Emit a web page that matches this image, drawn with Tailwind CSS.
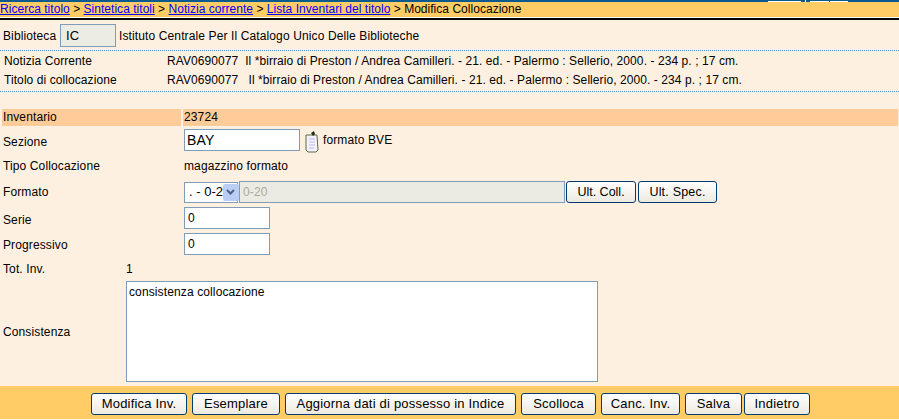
<!DOCTYPE html>
<html lang="it">

<head>
    <meta charset="UTF-8">
    <script src="https://cdn.jsdelivr.net/npm/@tailwindcss/browser@4"></script>
    <title>Modifica Collocazione</title>
</head>

<body class="bg-[#fef0e0] font-['Liberation_Sans',Arial,sans-serif] text-[12px] tracking-[0.12px] text-black overflow-hidden">
    <div class="w-[899px] h-[420px] flex flex-col">
        <!-- Top strip -->
        <div class="h-[2px] bg-[#0b5a8f] flex justify-end items-end">
            <span class="w-[33px] h-[1px] mr-[4px] bg-white"></span>
            <span class="w-[1px] h-[2px] mr-[4px] bg-white"></span>
            <span class="w-[19px] h-[1px] mr-[1px] bg-white"></span>
            <span class="w-[18px] h-[1px] mr-[51px] bg-white"></span>
        </div>

        <!-- Breadcrumb -->
        <div class="h-[15px] bg-[#ffcc66] leading-[15px] tracking-[0.03px] whitespace-nowrap">
            <a href="#" class="text-[#0000ff] underline">Ricerca titolo</a> &gt;
            <a href="#" class="text-[#0000ff] underline">Sintetica titoli</a> &gt;
            <a href="#" class="text-[#0000ff] underline">Notizia corrente</a> &gt;
            <a href="#" class="text-[#0000ff] underline">Lista Inventari del titolo</a> &gt;
            Modifica Collocazione
        </div>
        <div class="h-[1px] bg-white"></div>
        <div class="h-[2px] bg-black"></div>

        <!-- Biblioteca -->
        <div class="flex items-center h-[23px] mt-[4px] pl-[3px]">
            <span class="w-[57px] pt-[1px]">Biblioteca</span>
            <span class="w-[56px] h-[23px] pl-[5px] bg-[#ecece4] border border-[#7f9db9] leading-[21px] text-[13px]">IC</span>
            <span class="ml-[3px] pt-[1px]">Istituto Centrale Per Il Catalogo Unico Delle Biblioteche</span>
        </div>

        <!-- Notizia -->
        <div class="mt-[3px] h-[42px] border-y border-dotted border-[#4a90d9] tracking-[0.08px]">
            <div class="flex h-[19px] items-center pl-[4px]">
                <span class="w-[163px]">Notizia Corrente</span>
                <span class="whitespace-pre">RAV0690077  Il *birraio di Preston / Andrea Camilleri. - 21. ed. - Palermo : Sellerio, 2000. - 234 p. ; 17 cm.</span>
            </div>
            <div class="flex h-[19px] items-center pl-[4px]">
                <span class="w-[163px]">Titolo di collocazione</span>
                <span class="whitespace-pre">RAV0690077   Il *birraio di Preston / Andrea Camilleri. - 21. ed. - Palermo : Sellerio, 2000. - 234 p. ; 17 cm.</span>
            </div>
        </div>

        <!-- Form -->
        <div class="mt-[17px] flex h-[17px] pl-[2px] pr-[1px] gap-[2px] leading-[17px]">
            <span class="w-[179px] pl-[1px] bg-[#ffcc99]">Inventario</span>
            <span class="flex-1 pl-[1px] bg-[#ffcc99]">23724</span>
        </div>

        <div class="flex items-center h-[22px] mt-[3px] pl-[3px]">
            <span class="w-[181px] pt-[4px]">Sezione</span>
            <input type="text" value="BAY" class="w-[116px] h-[22px] px-[2px] bg-white border border-[#7f9db9] text-[14px] outline-none">
            <svg class="ml-[4px] mt-[4px]" width="16" height="24" viewBox="0 0 16 24">
                <path d="M2 5h11l1 15-2 2H4l-2-2z" fill="#f4f2ff" stroke="#5a6a40"/>
                <path d="M5 9h6M5 12h6M5 15h6M5 18h5" stroke="#c0b8e8"/>
                <path d="M7 3l3-2 1 3-2 2z" fill="#20300f"/>
            </svg>
            <span class="ml-[3px]">formato BVE</span>
        </div>

        <div class="flex items-center h-[16px] mt-[7px] pl-[3px]">
            <span class="w-[181px]">Tipo Collocazione</span>
            <span>magazzino formato</span>
        </div>

        <div class="flex items-center h-[22px] mt-[7px] pl-[3px]">
            <span class="w-[181px]">Formato</span>
            <span class="w-[54px] h-[21px] flex items-center justify-between pl-[4px] pr-[1px] bg-white border border-[#7f9db9] text-[13px] tracking-normal whitespace-nowrap">
                . - 0-2
                <span class="w-[16px] h-[17px] shrink-0 flex items-center justify-center bg-[#b9cdf5] rounded-[2px]">
                    <svg width="9" height="6" viewBox="0 0 9 6"><path d="M1 1l3.5 3.5L8 1" fill="none" stroke="#4d6185" stroke-width="2"/></svg>
                </span>
            </span>
            <input type="text" value="0-20" disabled class="w-[326px] h-[22px] ml-[1px] px-[3px] bg-[#ebebe4] border border-[#7f9db9] text-[#aca899] outline-none">
            <button class="h-[22px] ml-[1px] w-[70px] text-[12.5px] tracking-normal bg-gradient-to-b from-white to-[#eceadf] border border-[#003c74] rounded-[3px]">Ult. Coll.</button>
            <button class="h-[22px] ml-[2px] w-[79px] text-[12.5px] tracking-[0.2px] bg-gradient-to-b from-white to-[#eceadf] border border-[#003c74] rounded-[3px]">Ult. Spec.</button>
        </div>

        <div class="flex items-center h-[22px] mt-[4px] pl-[3px]">
            <span class="w-[181px] pt-[4px]">Serie</span>
            <input type="text" value="0" class="w-[86px] h-[22px] px-[3px] bg-white border border-[#7f9db9] outline-none">
        </div>

        <div class="flex items-center h-[22px] mt-[4px] pl-[3px]">
            <span class="w-[181px] pt-[2px]">Progressivo</span>
            <input type="text" value="0" class="w-[86px] h-[22px] px-[3px] bg-white border border-[#7f9db9] outline-none">
        </div>

        <div class="flex items-center h-[16px] mt-[6px] pl-[3px]">
            <span class="w-[123px]">Tot. Inv.</span>
            <span>1</span>
        </div>

        <div class="flex items-center h-[101px] mt-[4px] pl-[3px]">
            <span class="w-[123px]">Consistenza</span>
            <textarea class="w-[472px] h-[101px] px-[2px] py-[1px] bg-white border border-[#7f9db9] outline-none resize-none text-[12px]">consistenza collocazione</textarea>
        </div>

        <!-- Footer buttons -->
        <div class="mt-[4px] h-[33px] bg-[#ffcc66] flex justify-center items-start pt-[7px] pl-[2px] gap-[5px] text-[13px] tracking-[0.2px]">
            <button class="w-[96px] h-[22px] bg-gradient-to-b from-white to-[#eceadf] border border-[#003c74] rounded-[3px]">Modifica Inv.</button>
            <button class="w-[88px] h-[22px] bg-gradient-to-b from-white to-[#eceadf] border border-[#003c74] rounded-[3px]">Esemplare</button>
            <button class="w-[231px] h-[22px] bg-gradient-to-b from-white to-[#eceadf] border border-[#003c74] rounded-[3px]">Aggiorna dati di possesso in Indice</button>
            <button class="w-[75px] h-[22px] bg-gradient-to-b from-white to-[#eceadf] border border-[#003c74] rounded-[3px]">Scolloca</button>
            <button class="w-[79px] h-[22px] bg-gradient-to-b from-white to-[#eceadf] border border-[#003c74] rounded-[3px]">Canc. Inv.</button>
            <button class="w-[57px] h-[22px] bg-gradient-to-b from-white to-[#eceadf] border border-[#003c74] rounded-[3px]">Salva</button>
            <button class="w-[66px] h-[22px] -ml-[3px] bg-gradient-to-b from-white to-[#eceadf] border border-[#003c74] rounded-[3px]">Indietro</button>
        </div>
    </div>
</body>

</html>
